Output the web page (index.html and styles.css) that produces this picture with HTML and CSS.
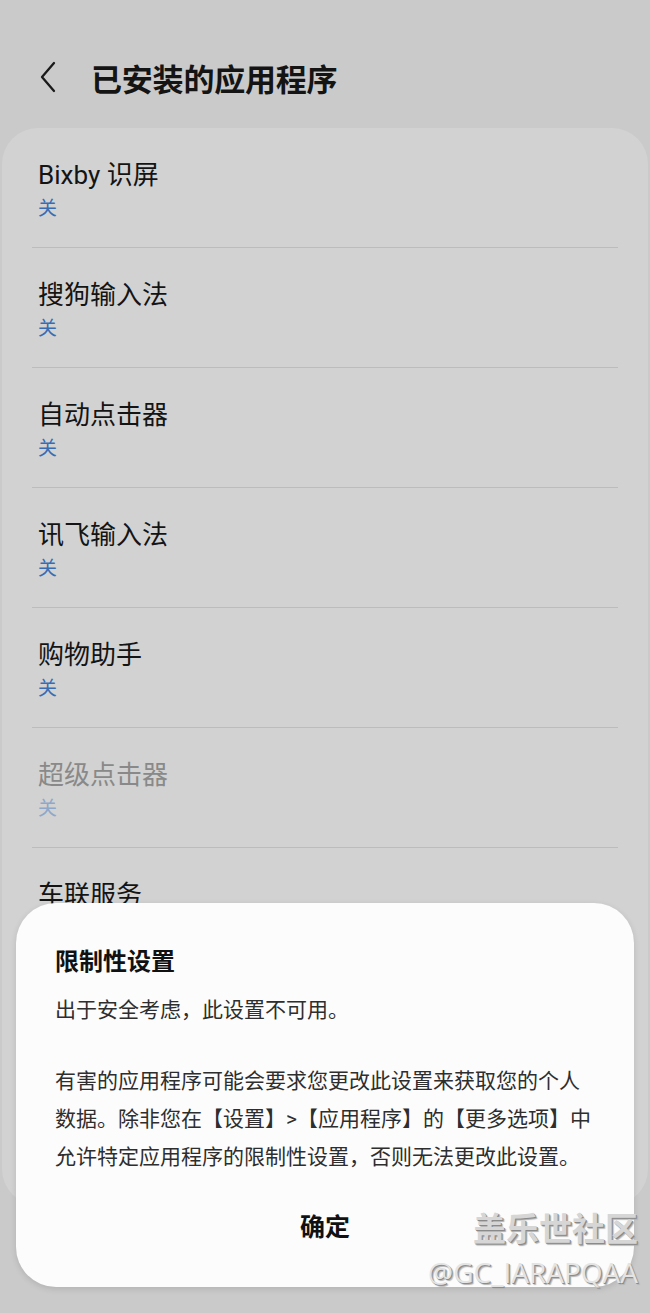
FILE: index.html
```html
<!DOCTYPE html>
<html lang="zh-CN">
<head>
    <meta charset="UTF-8">
    <title>已安装的应用程序</title>
    <meta name="viewport" content="width=device-width, initial-scale=1.0">
    <link rel="stylesheet" href="styles.css">
</head>
<body>

    <!-- Header -->
    <header class="top-bar">
        <svg class="back-icon" viewBox="0 0 20 32" width="20" height="32">
            <path d="M16 2 L4 16 L16 30" fill="none" stroke="#1a1a1a" stroke-width="2.3" stroke-linecap="round" stroke-linejoin="round"/>
        </svg>
        <h1>已安装的应用程序</h1>
    </header>

    <!-- App list -->
    <main class="card">
        <div class="item"><div class="name">Bixby 识屏</div><div class="state">关</div></div>
        <div class="item"><div class="name">搜狗输入法</div><div class="state">关</div></div>
        <div class="item"><div class="name">自动点击器</div><div class="state">关</div></div>
        <div class="item"><div class="name">讯飞输入法</div><div class="state">关</div></div>
        <div class="item"><div class="name">购物助手</div><div class="state">关</div></div>
        <div class="item disabled"><div class="name">超级点击器</div><div class="state">关</div></div>
        <div class="item"><div class="name">车联服务</div><div class="state">关</div></div>
    </main>

    <!-- Dialog -->
    <div class="dialog">
        <h2>限制性设置</h2>
        <p class="first">出于安全考虑，此设置不可用。</p>
        <p>有害的应用程序可能会要求您更改此设置来获取您的个人数据。除非您在【设置】&gt;【应用程序】的【更多选项】中允许特定应用程序的限制性设置，否则无法更改此设置。</p>
        <div class="actions"><button>确定</button></div>
    </div>

    <!-- Watermark -->
    <div class="watermark">
        <div class="wm-big">盖乐世社区</div>
        <div class="wm-small">@GC_IARAPQAA</div>
    </div>

</body>
</html>
```

FILE: styles.css
```css
body {
    margin: 0;
    width: 650px;
    height: 1313px;
    overflow: hidden;
    position: relative;
    background-color: #cacaca;
    font-family: Roboto, "Noto Sans CJK SC", sans-serif;
    color: #141414;
}
.top-bar {
    display: flex;
    align-items: center;
    height: 60px;
    padding: 47px 0 21px 38px;
}
.back-icon {
    margin-right: 33px;
}
.top-bar h1 {
    margin: 0;
    font-size: 31px;
    font-weight: bold;
    letter-spacing: -0.2px;
}
.card {
    margin: 0 2px;
    padding: 0 30px 237px;
    background-color: #d2d2d2;
    border-radius: 36px;
}
.item {
    height: 87px;
    padding: 32px 0 0 6px;
    border-bottom: 1px solid #bcbcbc;
}
.name {
    font-size: 26px;
    line-height: 30px;
}
.state {
    margin-top: 6px;
    font-size: 19px;
    line-height: 26px;
    color: #3a6cb2;
}
.disabled .name {
    color: #898989;
}
.disabled .state {
    color: #8fa7c9;
}
.dialog {
    position: absolute;
    left: 16px;
    top: 903px;
    width: 579px;
    height: 341px;
    padding: 43px 0 0 39px;
    background-color: #fcfcfc;
    border-radius: 40px;
    box-shadow: 0 2px 6px rgba(0, 0, 0, 0.12);
}
.dialog h2 {
    margin: 0;
    font-size: 24px;
    line-height: 32px;
    font-weight: bold;
    color: #111;
}
.dialog p {
    margin: 33px 0 0;
    width: 545px;
    font-size: 21px;
    line-height: 38px;
    color: #2e2e2e;
}
.dialog p.first {
    margin-top: 13px;
}
.actions {
    margin: 32px 0 0 -39px;
    text-align: center;
}
.actions button {
    border: none;
    background: none;
    padding: 0;
    font-family: Roboto, "Noto Sans CJK SC", sans-serif;
    font-size: 25px;
    line-height: 40px;
    font-weight: bold;
    color: #111;
}
.watermark {
    position: absolute;
    right: 12px;
    top: 1208px;
    text-align: right;
}
.wm-big {
    font-size: 33px;
    line-height: 44px;
    font-weight: bold;
    color: #d6d6d6;
    text-shadow: 1px 1px 0 #8a8a8a, 2px 2px 1px #b0b0b0;
}
.wm-small {
    margin-top: 4px;
    font-family: "Open Sans", sans-serif;
    font-size: 28px;
    line-height: 32px;
    color: #e4e4e4;
    letter-spacing: 0;
    text-shadow: 1px 1px 0 #8c8c8c, 2px 2px 1px #b4b4b4;
}
```
